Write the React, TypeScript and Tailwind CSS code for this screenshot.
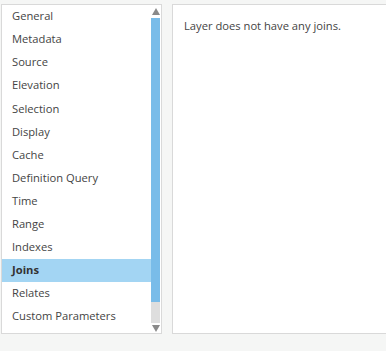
const ITEMS = [
  'General',
  'Metadata',
  'Source',
  'Elevation',
  'Selection',
  'Display',
  'Cache',
  'Definition Query',
  'Time',
  'Range',
  'Indexes',
  'Joins',
  'Relates',
  'Custom Parameters',
]

const SELECTED = 'Joins'

export default function App() {
  return (
    <div
      className="flex h-[351px] w-[386px] gap-[10px] overflow-hidden bg-[#f5f6f5] pl-[1px] pt-[4px] text-[11.2px] text-[#444]"
      style={{ fontFamily: '"Open Sans", "Noto Sans", sans-serif' }}
    >
      <div className="flex h-[330px] w-[161px] shrink-0 border border-[#d9d9d9] bg-white">
        <ul className="flex flex-1 flex-col">
          {ITEMS.map((item) => (
            <li
              key={item}
              className={`flex h-[23.1px] items-center pl-[10px] ${
                item === SELECTED ? 'bg-[#a3d5f3] font-bold text-[#333]' : ''
              }`}
            >
              {item}
            </li>
          ))}
        </ul>
        <div className="mr-[1px] flex w-[9px] flex-col items-center py-[1px]">
          <span className="mt-[2px] h-0 w-0 border-x-[4px] border-b-[7px] border-x-transparent border-b-[#8a8a8a]" />
          <div className="mt-[3px] h-[285px] w-full bg-[#79bce9]" />
          <div className="h-[21px] w-full bg-[#dedede]" />
          <span className="mt-[2px] h-0 w-0 border-x-[4px] border-t-[7px] border-x-transparent border-t-[#8a8a8a]" />
        </div>
      </div>
      <div className="h-[330px] flex-1 border border-r-0 border-[#d9d9d9] bg-white pl-[11px] pt-[13px]">
        Layer does not have any joins.
      </div>
    </div>
  )
}
